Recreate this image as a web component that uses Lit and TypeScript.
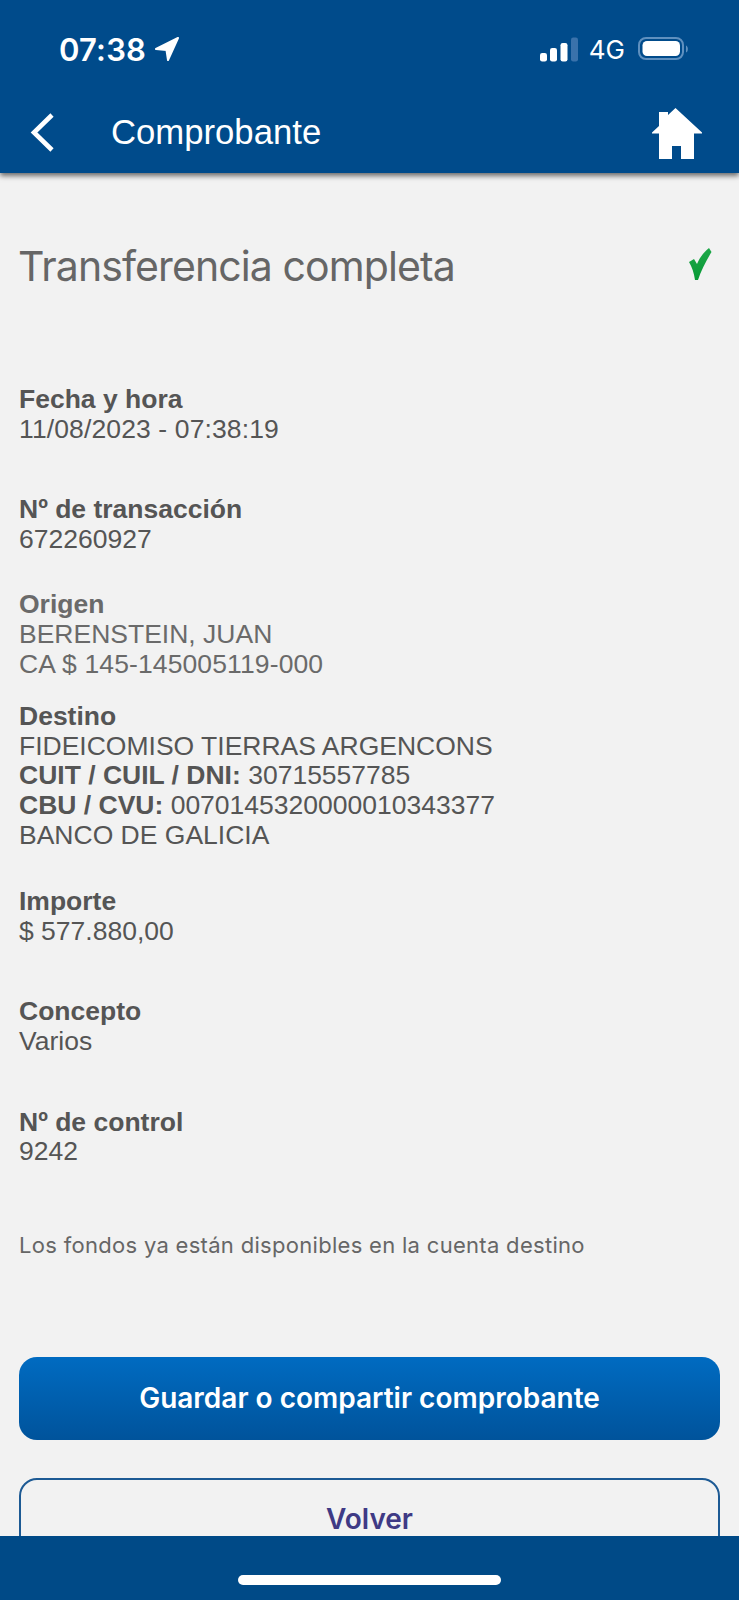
import { LitElement, html, css } from 'lit';
import { customElement } from 'lit/decorators.js';

@customElement('app-root')
export class AppRoot extends LitElement {
  static styles = css`
    :host {
      display: block;
      position: relative;
      width: 739px;
      height: 1600px;
      overflow: hidden;
      background: #f2f2f2;
      font-family: 'Liberation Sans', Arial, sans-serif;
      color: #555;
    }

    .top {
      height: 173px;
      background: #004b8b;
      box-shadow: 0 3px 5px rgba(0, 0, 0, 0.55);
      color: #fff;
    }

    .status {
      height: 95px;
      display: flex;
      align-items: flex-start;
      justify-content: space-between;
      padding: 32px 50px 0 59px;
      box-sizing: border-box;
    }
    .clock {
      display: flex;
      align-items: center;
      gap: 8px;
      height: 34px;
      font-family: Inter, sans-serif;
      font-weight: 600;
      font-size: 31px;
      letter-spacing: 0.2px;
    }
    .indicators {
      display: flex;
      align-items: center;
      height: 34px;
      font-size: 26px;
    }
    .net {
      margin: 0 13px 0 11px;
      font-family: Inter, sans-serif;
    }

    .nav {
      height: 78px;
      display: flex;
      align-items: center;
      padding: 0 37px 4px 29px;
      box-sizing: border-box;
    }
    .nav h1 {
      flex: 1;
      margin: 0 0 0 56px;
      font-weight: 400;
      font-size: 34.7px;
    }
    .nav .house {
      margin-top: 4px;
    }

    .page {
      padding: 0 19px;
    }
    .heading {
      display: flex;
      align-items: center;
      justify-content: space-between;
      padding: 68px 8px 0 0;
      height: 52px;
      margin-bottom: 92px;
    }
    .heading h2 {
      margin: -2px 0 0 -1px;
      font-family: Inter, sans-serif;
      font-weight: 400;
      font-size: 41px;
      letter-spacing: -0.9px;
      color: #666;
    }
    .heading svg {
      margin-top: -6px;
    }

    .field {
      font-size: 26.5px;
      line-height: 29.6px;
      margin-bottom: 51px;
    }
    .field b {
      font-weight: 700;
    }
    .field div {
      white-space: nowrap;
    }
    .field .dashed {
      letter-spacing: 0.12px;
    }
    .field.source {
      color: #6a6a6a;
      margin-bottom: 23px;
    }
    .field.target {
      margin-bottom: 37px;
    }
    .field.tight {
      margin-bottom: 36px;
    }
    .field.last {
      margin-bottom: 63px;
    }

    .note {
      margin: 0 0 97px;
      font-family: Inter, sans-serif;
      font-size: 22px;
      line-height: 30px;
      letter-spacing: 0.3px;
      color: #666;
    }

    .btn {
      display: flex;
      align-items: center;
      justify-content: center;
      box-sizing: border-box;
      height: 83px;
      border-radius: 18px;
      font-family: Inter, sans-serif;
      font-weight: 600;
      font-size: 28px;
    }
    .btn.primary {
      background: linear-gradient(#006bc1, #00539b);
      color: #fff;
      margin-bottom: 38px;
    }
    .btn.secondary {
      border: 2px solid #1d5a94;
      color: #3f3a85;
    }

    .bottom {
      position: absolute;
      left: 0;
      right: 0;
      bottom: 0;
      height: 64px;
      background: #004a87;
      display: flex;
      justify-content: center;
      align-items: flex-end;
      padding-bottom: 15px;
      box-sizing: border-box;
    }
    .home-bar {
      width: 263px;
      height: 10px;
      border-radius: 5px;
      background: #fff;
    }
  `;

  render() {
    return html`
      <header class="top">
        <div class="status">
          <div class="clock">
            <span>07:38</span>
            <svg width="26" height="26" viewBox="0 0 26 26">
              <path fill="#fff" stroke="#fff" stroke-width="2" stroke-linejoin="round"
                d="M24 2 L2 13 L12.5 14 L14 24 Z" />
            </svg>
          </div>
          <div class="indicators">
            <svg width="38" height="25" viewBox="0 0 38 25">
              <rect x="0" y="16" width="7" height="8.5" rx="2.2" fill="#fff" />
              <rect x="10" y="11" width="7" height="13.5" rx="2.2" fill="#fff" />
              <rect x="20.5" y="6" width="7" height="18.5" rx="2.2" fill="#fff" />
              <rect x="31" y="0.5" width="7" height="24" rx="2.2" fill="#3a72ab" />
            </svg>
            <span class="net">4G</span>
            <svg width="51" height="26" viewBox="0 0 51 26">
              <rect x="1" y="2" width="44" height="21" rx="7" fill="none" stroke="#5f90bf" stroke-width="2" />
              <rect x="4.5" y="5" width="37.5" height="15" rx="4.5" fill="#fff" />
              <path d="M48 9.5 C50.5 10.5 50.5 15.5 48 16.5 Z" fill="#5f90bf" />
            </svg>
          </div>
        </div>
        <div class="nav">
          <svg width="26" height="40" viewBox="0 0 26 40">
            <path d="M23 3 L5 20.5 L23 38" fill="none" stroke="#fff" stroke-width="4.6" />
          </svg>
          <h1>Comprobante</h1>
          <svg class="house" width="50" height="52" viewBox="0 0 50 52">
            <path fill="#fff"
              d="M23.5 0 L50 24.5 L50 25.5 L42 25.5 L42 51 L29 51 L29 38 L20 38 L20 51 L7 51 L7 25.5 L0 25.5 L0 24.5 L7 18 L7 4 L16 4 L16 7 Z" />
          </svg>
        </div>
      </header>

      <main class="page">
        <div class="heading">
          <h2>Transferencia completa</h2>
          <svg width="24" height="34" viewBox="0 0 24 34">
            <defs>
              <linearGradient id="tick" x1="0" y1="0" x2="0" y2="1">
                <stop offset="0" stop-color="#1fa84a" />
                <stop offset="1" stop-color="#079a35" />
              </linearGradient>
            </defs>
            <path fill="url(#tick)"
              d="M1 15 L6 12 L9 17 C12 10 16 5 21 1 L23.5 5 C18 14 13 24 10 33 L7 33 C6 26 4 20 1 15 Z" />
          </svg>
        </div>

        <section class="field">
          <div><b>Fecha y hora</b></div>
          <div class="dashed">11/08/2023 - 07:38:19</div>
        </section>
        <section class="field tight">
          <div><b>Nº de transacción</b></div>
          <div>672260927</div>
        </section>
        <section class="field source">
          <div><b>Origen</b></div>
          <div>BERENSTEIN, JUAN</div>
          <div class="dashed">CA $ 145-145005119-000</div>
        </section>
        <section class="field target">
          <div><b>Destino</b></div>
          <div>FIDEICOMISO TIERRAS ARGENCONS</div>
          <div><b>CUIT / CUIL / DNI:</b> 30715557785</div>
          <div><b>CBU / CVU:</b> 0070145320000010343377</div>
          <div>BANCO DE GALICIA</div>
        </section>
        <section class="field">
          <div><b>Importe</b></div>
          <div>$ 577.880,00</div>
        </section>
        <section class="field">
          <div><b>Concepto</b></div>
          <div>Varios</div>
        </section>
        <section class="field last">
          <div><b>Nº de control</b></div>
          <div>9242</div>
        </section>

        <p class="note">Los fondos ya están disponibles en la cuenta destino</p>

        <div class="btn primary">Guardar o compartir comprobante</div>
        <div class="btn secondary">Volver</div>
      </main>

      <footer class="bottom"><div class="home-bar"></div></footer>
    `;
  }
}
